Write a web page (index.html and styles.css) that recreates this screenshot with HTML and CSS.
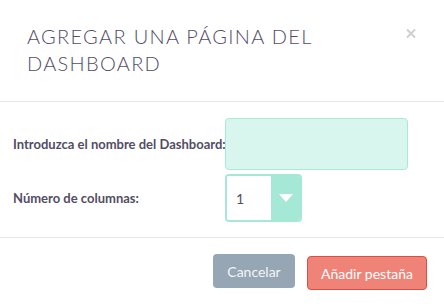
FILE: index.html
```html
<!DOCTYPE html>
<html lang="es">
<head>
    <meta charset="UTF-8">
    <title>Agregar una página del Dashboard</title>
    <link rel="stylesheet" href="styles.css">
</head>
<body>
    <div class="modal">
        <div class="modal-header">
            <h4 class="modal-title">Agregar una página del Dashboard</h4>
            <button class="close" type="button" aria-label="Cerrar">
                <svg width="10" height="9" viewBox="0 0 10 9">
                    <path d="M1 0.5 L9 8.5 M9 0.5 L1 8.5" stroke="#cfcfcf" stroke-width="2" fill="none"/>
                </svg>
            </button>
        </div>
        <div class="modal-body">
            <div class="form-row">
                <label class="form-label" for="dashName">Introduzca el nombre del Dashboard:</label>
                <input class="form-input" type="text" id="dashName">
            </div>
            <div class="form-row">
                <label class="form-label" for="numCols">Número de columnas:</label>
                <div class="select-wrap">
                    <span class="select-value" id="numCols">1</span>
                    <span class="select-arrow"></span>
                </div>
            </div>
        </div>
        <div class="modal-footer">
            <button class="btn btn-cancel" type="button">Cancelar</button>
            <button class="btn btn-primary" type="button">Añadir pestaña</button>
        </div>
    </div>
</body>
</html>
```

FILE: styles.css
```css
body {
    margin: 0;
    background-color: #fff;
    font-family: Lato, "Open Sans", sans-serif;
    color: #534d64;
}
.modal {
    width: 444px;
}
.modal-header {
    display: flex;
    justify-content: space-between;
    align-items: flex-start;
    padding: 23px 27px 24px 27px;
    border-bottom: 1px solid #e5e5e5;
}
.modal-title {
    margin: 0;
    width: 300px;
    font-size: 20px;
    font-weight: 300;
    line-height: 27px;
    letter-spacing: 1.3px;
    text-transform: uppercase;
}
.close {
    margin: 6px 1px 0 0;
    padding: 0;
    border: none;
    background: none;
    line-height: 0;
}
.modal-body {
    display: flex;
    flex-direction: column;
    gap: 4px;
    padding: 16px 13px 15px 13px;
}
.form-row {
    display: flex;
    align-items: center;
}
.form-label {
    width: 212px;
    font-size: 13px;
    font-weight: bold;
    white-space: nowrap;
}
.form-input {
    box-sizing: border-box;
    width: 183px;
    height: 52px;
    background-color: #d8f5ee;
    border: 1px solid #a8e9d8;
    border-radius: 4px;
}
.select-wrap {
    box-sizing: border-box;
    display: flex;
    width: 77px;
    height: 48px;
    border: 2px solid #a5e8d6;
    border-radius: 4px;
    overflow: hidden;
}
.select-value {
    flex: 1;
    display: flex;
    align-items: center;
    padding-left: 9px;
    font-size: 14px;
    background-color: #fff;
}
.select-arrow {
    display: flex;
    align-items: center;
    justify-content: center;
    width: 29px;
    background-color: #a5e8d6;
}
.select-arrow::after {
    content: "";
    border-left: 7px solid transparent;
    border-right: 7px solid transparent;
    border-top: 8px solid #fff;
}
.modal-footer {
    display: flex;
    justify-content: flex-end;
    align-items: flex-start;
    gap: 12px;
    padding: 16px 17px 0 0;
    border-top: 1px solid #e5e5e5;
}
.btn {
    height: 34px;
    padding: 0;
    font-family: Lato, "Open Sans", sans-serif;
    font-size: 14px;
    border-radius: 4px;
    color: #fff;
}
.btn-cancel {
    width: 82px;
    background-color: #96a6b5;
    border: none;
    color: #f3f5f7;
}
.btn-primary {
    width: 120px;
    margin-top: 2px;
    background-color: #f08377;
    border: 1px solid #de4d44;
}
```
